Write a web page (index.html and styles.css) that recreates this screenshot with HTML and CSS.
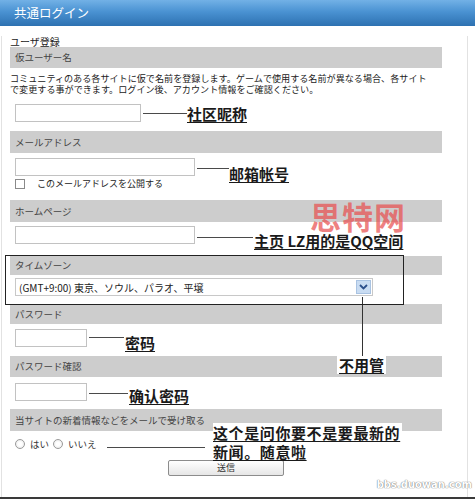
FILE: index.html
```html
<!DOCTYPE html>
<html>
<head>
	<title>共通ログイン</title>
	<meta charset="utf-8">
	<link rel="stylesheet" href="styles.css">
</head>
<body>
	<div class="page">
		<div class="head">共通ログイン</div>

		<div class="content">
			<div class="caption">ユーザ登録</div>
			<div class="bar bar-name">仮ユーザー名</div>
			<p class="desc">コミュニティのある各サイトに仮で名前を登録します。ゲームで使用する名前が異なる場合、各サイト<br>で変更する事ができます。ログイン後、アカウント情報をご確認ください。</p>
			<div class="row row-name">
				<input type="text" class="text w-name">
				<span class="link l-name"></span>
				<span class="note n-name">社区昵称</span>
			</div>

			<div class="bar bar-mail">メールアドレス</div>
			<div class="row row-mail">
				<input type="text" class="text w-mail">
				<span class="link l-mail"></span>
				<span class="note n-mail">邮箱帐号</span>
			</div>
			<div class="check-row">
				<span class="check"></span>
				<span>このメールアドレスを公開する</span>
			</div>

			<div class="bar bar-home">ホームページ</div>
			<div class="row row-home">
				<input type="text" class="text w-mail">
				<span class="link l-home"></span>
				<span class="note n-home">主页 LZ用的是QQ空间</span>
			</div>

			<div class="tz">
				<div class="bar bar-tz">タイムゾーン</div>
				<div class="select">
					<span>(GMT+9:00) 東京、ソウル、パラオ、平壌</span>
					<span class="arrow">
						<svg width="9" height="6" viewBox="0 0 9 6"><path d="M1 1 L4.5 4.5 L8 1" fill="none" stroke="#2b4f8a" stroke-width="1.8"/></svg>
					</span>
				</div>
			</div>

			<div class="bar bar-pass">パスワード</div>
			<div class="row row-pass">
				<input type="password" class="text w-pass">
				<span class="link l-pass"></span>
				<span class="note n-pass">密码</span>
			</div>

			<div class="bar bar-conf">パスワード確認</div>
			<div class="row row-conf">
				<input type="password" class="text w-pass">
				<span class="link l-conf"></span>
				<span class="note n-conf">确认密码</span>
			</div>

			<div class="bar bar-news">当サイトの新着情報などをメールで受け取る</div>
			<div class="radio-row">
				<span class="radio"></span><span class="opt">はい</span>
				<span class="radio"></span><span class="opt">いいえ</span>
				<span class="link l-news"></span>
			</div>
			<button class="submit">送信</button>
		</div>

		<!-- annotations drawn over the form -->
		<div class="stamp">思特网</div>
		<div class="drop"></div>
		<div class="note tag-skip">不用管</div>
		<div class="note tag-news">这个是问你要不是要最新的<br>新闻。随意啦</div>
		<div class="mark">bbs.duowan.com</div>
	</div>
</body>
</html>
```

FILE: styles.css
```css
body{
	margin: 0;
	background: white;
	font-family: "Noto Sans CJK JP", "Liberation Sans", sans-serif;
	color: #333;
}
.page{
	position: relative;
	width: 475px;
	height: 497px;
	border-bottom: 2px solid #3a3a3a;
	overflow: hidden;
}
.head{
	height: 26px;
	line-height: 26px;
	padding-left: 14px;
	font-size: 12.5px;
	color: white;
	background: linear-gradient(to bottom, #72b1e6 0%, #4a92d2 45%, #2d71b1 100%);
}
.content{
	height: 471px;
	width: 457px;
	padding-left: 8px;
	border-left: 1px solid #e2e2e2;
	border-right: 1px solid #e2e2e2;
	margin-left: 1px;
}
.caption{
	margin-top: 10px;
	height: 11px;
	line-height: 11px;
	font-size: 10px;
	color: #222;
}
.bar{
	width: 427px;
	padding-left: 5px;
	background: #cdcdcd;
	font-size: 9.5px;
	color: #444;
}
.bar-name{ height: 21px; line-height: 21px; }
.bar-mail{ height: 22px; line-height: 22px; margin-top: 9px; }
.bar-home{ height: 22px; line-height: 22px; margin-top: 11px; }
.bar-tz{ height: 19px; line-height: 19px; }
.bar-pass{ height: 20px; line-height: 20px; }
.bar-conf{ height: 21px; line-height: 21px; margin-top: 9px; }
.bar-news{ height: 22px; line-height: 22px; margin-top: 8px; }

.desc{
	margin: 5px 0 0;
	height: 21px;
	font-size: 9.1px;
	line-height: 10.5px;
	color: #222;
	white-space: nowrap;
}

.row{
	display: flex;
	align-items: flex-start;
	height: 18px;
	padding-left: 5px;
}
.row-name{ margin-top: 10px; }
.row-mail{ margin-top: 5px; }
.row-home{ margin-top: 4px; }
.row-pass{ margin-top: 5px; }
.row-conf{ margin-top: 6px; }

.text{
	height: 18px;
	box-sizing: border-box;
	border: 1px solid #c2c2c2;
	background: white;
	margin: 0;
	padding: 0;
}
.w-name{ width: 126px; }
.w-mail{ width: 180px; }
.w-pass{ width: 72px; }

.link{
	display: block;
	height: 1px;
	background: #4a4a4a;
	margin-left: 2px;
	margin-top: 10px;
}
.l-name{ width: 44px; margin-top: 9px; }
.l-mail{ width: 32px; }
.l-home{ width: 56px; margin-top: 11px; }
.l-pass{ width: 35px; margin-top: 8px; }
.l-conf{ width: 39px; }

.note{
	font-family: "Noto Sans CJK SC", sans-serif;
	font-weight: bold;
	font-size: 15px;
	line-height: 18px;
	color: #1a1a1a;
	text-decoration: underline;
	text-decoration-thickness: 1px;
	text-underline-offset: 2px;
	white-space: nowrap;
	background: white;
}
.n-name{ margin-top: 1px; }
.n-mail{ margin-top: 7px; }
.n-home{ margin-top: 6px; margin-left: 1px; }
.n-pass{ margin-top: 5px; margin-left: 1px; }
.n-conf{ margin-top: 4px; margin-left: 1px; }

.check-row{
	display: flex;
	align-items: center;
	height: 11px;
	margin-top: 2px;
	padding-left: 5px;
	font-size: 9px;
	color: #222;
}
.check{
	width: 8px;
	height: 8px;
	border: 1px solid #8a8a8a;
	background: white;
	margin-right: 12px;
}

.tz{
	margin-top: 12px;
	padding-bottom: 8px;
}
.select{
	display: flex;
	justify-content: space-between;
	align-items: center;
	width: 358px;
	height: 18px;
	box-sizing: border-box;
	margin: 3px 0 0 5px;
	padding: 0 1px 0 3px;
	border: 1px solid #c8c8c8;
	background: white;
	font-size: 10px;
	color: #222;
}
.arrow{
	display: flex;
	align-items: center;
	justify-content: center;
	width: 13px;
	height: 12px;
	background: #c9dcf2;
	border: 1px solid #a9c3e2;
}

.radio-row{
	display: flex;
	align-items: center;
	height: 12px;
	margin-top: 7px;
	padding-left: 5px;
	font-size: 9.5px;
	color: #333;
}
.radio{
	width: 8px;
	height: 8px;
	border: 1px solid #9a9a9a;
	border-radius: 50%;
	background: radial-gradient(circle, white 30%, #e4e4e4 100%);
	margin-right: 5px;
}
.opt{
	margin-right: 4px;
}
.l-news{
	width: 98px;
	margin-left: 6px;
	margin-top: 7px;
}

.submit{
	display: block;
	width: 116px;
	height: 16px;
	margin: 10px 0 0 158px;
	padding: 0;
	border: 1px solid #8c8c8c;
	border-radius: 2px;
	background: linear-gradient(to bottom, #ffffff, #e6e6e6);
	font-family: "Noto Sans CJK JP", sans-serif;
	font-size: 9px;
	line-height: 14px;
	color: #333;
}

.stamp{
	position: absolute;
	left: 310px;
	top: 200px;
	font-family: "Noto Sans CJK SC", sans-serif;
	font-weight: bold;
	font-size: 31px;
	line-height: 31px;
	color: rgba(232, 80, 80, 0.72);
	letter-spacing: 1px;
}
.page::after{
	content: '';
	position: absolute;
	left: 5px;
	top: 255px;
	width: 397px;
	height: 48px;
	border: 1px solid #222;
}
.drop{
	position: absolute;
	left: 362px;
	top: 297px;
	width: 1px;
	height: 60px;
	background: #333;
}
.tag-skip{
	position: absolute;
	left: 337px;
	top: 356px;
	padding: 0 2px;
}
.tag-news{
	position: absolute;
	left: 213px;
	top: 423px;
	line-height: 19px;
	padding-right: 2px;
	letter-spacing: 0.6px;
}
.mark{
	position: absolute;
	right: 3px;
	top: 479px;
	font-family: "DejaVu Sans", sans-serif;
	font-size: 10px;
	font-weight: bold;
	color: white;
	text-shadow: 0 0 1px #777, 0 0 1px #777;
}
```
